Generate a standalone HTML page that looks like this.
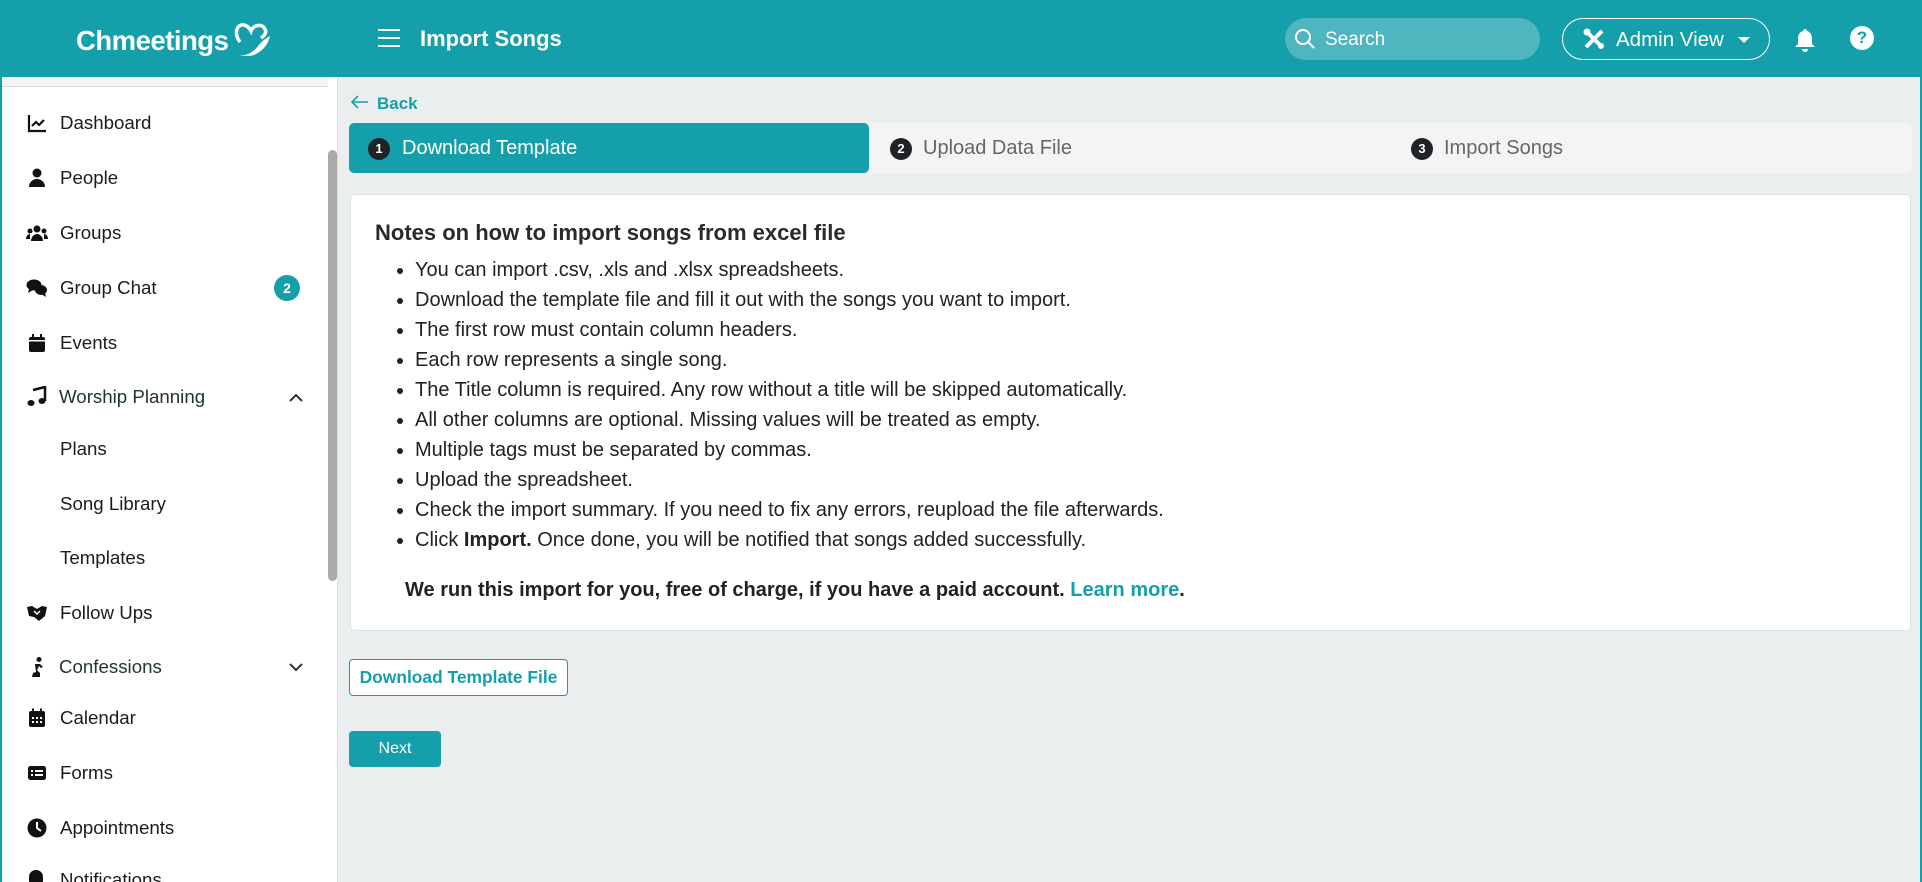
<!DOCTYPE html>
<html><head><meta charset="utf-8"><style>
*{box-sizing:border-box;margin:0;padding:0}
html{width:1922px;height:882px;overflow:hidden}
body{width:1922px;height:882px;overflow:hidden;font-family:"Liberation Sans",sans-serif;background:#eaeeef;position:relative}
.hdr{position:absolute;left:0;top:0;width:1922px;height:77px;background:#159fab;color:#fff}
.abs{position:absolute}
.side{position:absolute;left:0;top:77px;width:338px;height:805px;background:#fff;border-right:1px solid #dcdcdc;overflow:hidden}
.it{position:absolute;left:60px;font-size:18.7px;color:#1c1c1c;transform:translateY(-50%)}
.ic{position:absolute;left:26px;transform:translateY(-50%);width:22px;height:22px}
.main li{height:30px;line-height:30px}
</style></head><body>
<div class="hdr">
 <div class="abs" style="left:76px;top:25px;font-size:27.5px;font-weight:bold;letter-spacing:-0.5px">Chmeetings</div>
 <svg class="abs" style="left:232px;top:20px" width="40" height="40" viewBox="0 0 40 40" fill="none" stroke="#fff" stroke-width="3.5"><path d="M8 22 C2 14 4 4 12 5 C16 6 18 9 19 11 C21 5 30 3 33 9 C35 13 32 16 29 18"/><path d="M6 36 C14 36 22 32 26 26 C29 22 34 18 38 16 C36 26 28 34 18 36 Z" fill="#fff" stroke="none"/></svg>
 <div class="abs" style="left:378px;top:29px;width:22px;height:2px;background:#fff;box-shadow:0 8px 0 #fff,0 16px 0 #fff"></div>
 <div class="abs" style="left:420px;top:26px;font-size:22px;font-weight:bold">Import Songs</div>
 <div class="abs" style="left:1285px;top:18px;width:255px;height:42px;border-radius:21px;background:#4fb5bf"></div>
 <svg class="abs" style="left:1294px;top:28px" width="22" height="22" viewBox="0 0 22 22" fill="none" stroke="#fff" stroke-width="2"><circle cx="9" cy="9" r="7"/><path d="M14 14l6 6"/></svg>
 <div class="abs" style="left:1325px;top:29px;font-size:19px">Search</div>
 <div class="abs" style="left:1562px;top:18px;width:208px;height:42px;border-radius:21px;border:1.5px solid #fff"></div>
 <svg class="abs" style="left:1583px;top:28px" width="22" height="22" viewBox="0 0 22 22" fill="#fff" stroke="#fff"><path d="M3 19L19 3" stroke-width="4"/><path d="M3 3l16 16" stroke-width="4"/><circle cx="4" cy="4" r="3"/><circle cx="18" cy="18" r="2.5"/></svg>
 <div class="abs" style="left:1616px;top:28px;font-size:20.5px">Admin View</div>
 <div class="abs" style="left:1738px;top:37px;border:6px solid transparent;border-top:6px solid #fff;border-bottom:0"></div>
 <svg class="abs" style="left:1794px;top:27px" width="22" height="26" viewBox="0 0 22 26" fill="#fff"><path d="M11 2c1 0 2 1 2 2c4 1 5 5 5 8v5l3 3H1l3-3v-5c0-3 1-7 5-8c0-1 1-2 2-2z"/><path d="M8 22h6c0 2-1.5 3-3 3s-3-1-3-3z"/></svg>
 <div class="abs" style="left:1850px;top:26px;width:24px;height:24px;border-radius:50%;background:#fff;color:#159fab;font-weight:bold;font-size:17px;text-align:center;line-height:24px">?</div>
</div>

<div class="side">
 <div class="abs" style="left:0;top:0;width:328px;height:10px;background:#f4f4f4;border-bottom:1px solid #dcdcdc"></div>
 <div class="abs" style="left:328px;top:73px;width:9px;height:431px;border-radius:5px;background:#aaa"></div>
 <svg class="ic" style="top:46px" viewBox="0 0 22 22" fill="none" stroke="#111" stroke-width="2.2"><path d="M3 3v16h17"/><path d="M6 14l4-4 3 3 5-5"/></svg>
 <div class="it" style="top:46px">Dashboard</div>
 <svg class="ic" style="top:101px" viewBox="0 0 22 22" fill="#111"><circle cx="11" cy="6" r="4.5"/><path d="M3 20c0-5 4-8 8-8s8 3 8 8z"/></svg>
 <div class="it" style="top:101px">People</div>
 <svg class="ic" style="top:156px" viewBox="0 0 22 22" fill="#111"><circle cx="11" cy="7" r="3.5"/><circle cx="4" cy="9" r="2.5"/><circle cx="18" cy="9" r="2.5"/><path d="M5 19c0-4 3-7 6-7s6 3 6 7z"/><path d="M0 17c0-3 2-5 4-5v5z"/><path d="M22 17c0-3-2-5-4-5v5z"/></svg>
 <div class="it" style="top:156px">Groups</div>
 <svg class="ic" style="top:211px" viewBox="0 0 22 22" fill="#111"><ellipse cx="8" cy="8" rx="7.5" ry="5.5"/><path d="M3 12l-1 4 5-3z"/><ellipse cx="15" cy="13" rx="6" ry="5"/><path d="M19 16l1 4-5-3z"/></svg>
 <div class="it" style="top:211px">Group Chat</div>
 <div class="abs" style="left:274px;top:198px;width:26px;height:26px;border-radius:13px;background:#159fab;color:#fff;font-size:14px;font-weight:bold;text-align:center;line-height:26px">2</div>
 <svg class="ic" style="top:266px" viewBox="0 0 22 22" fill="#111"><rect x="3" y="5" width="16" height="15" rx="2"/><rect x="6" y="2" width="2" height="5"/><rect x="14" y="2" width="2" height="5"/><rect x="3" y="8" width="16" height="1.5" fill="#fff"/></svg>
 <div class="it" style="top:266px">Events</div>
 <svg class="ic" style="top:320px" viewBox="0 0 22 22" fill="#111"><path d="M7 4l12-3v14" stroke="#111" stroke-width="2.5" fill="none"/><ellipse cx="5" cy="17" rx="3.5" ry="3"/><ellipse cx="16" cy="15" rx="3.5" ry="3"/></svg>
 <div class="it" style="top:320px;left:59px;color:#233">Worship Planning</div>
 <svg class="abs" style="left:288px;top:314px" width="16" height="12" viewBox="0 0 16 12" fill="none" stroke="#333" stroke-width="2"><path d="M2 10l6-6 6 6"/></svg>
 <div class="it" style="top:372px">Plans</div>
 <div class="it" style="top:427px">Song Library</div>
 <div class="it" style="top:481px">Templates</div>
 <svg class="ic" style="top:536px" viewBox="0 0 22 22" fill="#111"><path d="M1 5l5-1 5 3 5-3 5 1-2 9-6 5-5-4-5-1z"/><path d="M8 9l3 3 3-3" stroke="#fff" stroke-width="1.5" fill="none"/></svg>
 <div class="it" style="top:536px">Follow Ups</div>
 <svg class="ic" style="top:590px" viewBox="0 0 22 22" fill="#111"><circle cx="13" cy="3.5" r="2.5"/><path d="M9 8l5 0 3 3-2 1-2-2-2 4 3 3v4H6l1-4 3-1z"/></svg>
 <div class="it" style="top:590px;left:59px;color:#233">Confessions</div>
 <svg class="abs" style="left:288px;top:584px" width="16" height="12" viewBox="0 0 16 12" fill="none" stroke="#333" stroke-width="2"><path d="M2 3l6 6 6-6"/></svg>
 <svg class="ic" style="top:641px" viewBox="0 0 22 22" fill="#111"><rect x="3" y="4" width="16" height="16" rx="2"/><rect x="6" y="1.5" width="2" height="4"/><rect x="14" y="1.5" width="2" height="4"/><g fill="#fff"><rect x="6" y="10" width="2" height="2"/><rect x="10" y="10" width="2" height="2"/><rect x="14" y="10" width="2" height="2"/><rect x="6" y="14" width="2" height="2"/><rect x="10" y="14" width="2" height="2"/><rect x="14" y="14" width="2" height="2"/></g></svg>
 <div class="it" style="top:641px">Calendar</div>
 <svg class="ic" style="top:696px" viewBox="0 0 22 22" fill="#111"><rect x="2" y="4" width="18" height="14" rx="2.5"/><g fill="#fff"><rect x="5" y="8" width="2" height="2"/><rect x="9" y="8" width="8" height="2"/><rect x="5" y="12" width="2" height="2"/><rect x="9" y="12" width="8" height="2"/></g></svg>
 <div class="it" style="top:696px">Forms</div>
 <svg class="ic" style="top:751px" viewBox="0 0 22 22"><circle cx="11" cy="11" r="9.5" fill="#111"/><path d="M11 5v6l4 3" stroke="#fff" stroke-width="2" fill="none"/></svg>
 <div class="it" style="top:751px">Appointments</div>
 <div class="it" style="top:803px">Notifications</div>
 <div class="abs" style="left:29px;top:793px;width:14px;height:18px;border-radius:7px 7px 2px 2px;background:#111"></div>
</div>

<div class="main">
 <svg class="abs" style="left:351px;top:95px" width="18" height="14" viewBox="0 0 18 14" fill="none" stroke="#159fab" stroke-width="1.6"><path d="M17 7H2M7 1L1 7l6 6"/></svg>
 <div class="abs" style="left:377px;top:94px;font-size:17px;font-weight:bold;color:#159fab">Back</div>
 <div class="abs" style="left:349px;top:123px;width:1563px;height:50px;background:#f4f4f4;border-radius:5px"></div>
 <div class="abs" style="left:349px;top:123px;width:520px;height:50px;background:#159fab;border-radius:5px"></div>
 <div class="abs" style="left:368px;top:138px;width:22px;height:22px;border-radius:50%;background:#1f2328;color:#fff;font-size:13px;font-weight:bold;text-align:center;line-height:22px">1</div>
 <div class="abs" style="left:402px;top:137px;font-size:20px;color:#fff">Download Template</div>
 <div class="abs" style="left:890px;top:138px;width:22px;height:22px;border-radius:50%;background:#1f2328;color:#fff;font-size:13px;font-weight:bold;text-align:center;line-height:22px">2</div>
 <div class="abs" style="left:923px;top:137px;font-size:20px;color:#666">Upload Data File</div>
 <div class="abs" style="left:1411px;top:138px;width:22px;height:22px;border-radius:50%;background:#1f2328;color:#fff;font-size:13px;font-weight:bold;text-align:center;line-height:22px">3</div>
 <div class="abs" style="left:1444px;top:137px;font-size:20px;color:#666">Import Songs</div>

 <div class="abs" style="left:350px;top:194px;width:1561px;height:437px;background:#fff;border:1px solid #dde2e4;border-radius:5px">
  <div class="abs" style="left:24px;top:25px;font-size:22px;font-weight:bold;color:#2a2a2a">Notes on how to import songs from excel file</div>
  <ul class="abs" style="left:64px;top:60px;font-size:20px;color:#222;list-style:disc">
   <li>You can import .csv, .xls and .xlsx spreadsheets.</li>
   <li>Download the template file and fill it out with the songs you want to import.</li>
   <li>The first row must contain column headers.</li>
   <li>Each row represents a single song.</li>
   <li>The Title column is required. Any row without a title will be skipped automatically.</li>
   <li>All other columns are optional. Missing values will be treated as empty.</li>
   <li>Multiple tags must be separated by commas.</li>
   <li>Upload the spreadsheet.</li>
   <li>Check the import summary. If you need to fix any errors, reupload the file afterwards.</li>
   <li>Click <b>Import.</b> Once done, you will be notified that songs added successfully.</li>
  </ul>
  <div class="abs" style="left:54px;top:384px;font-size:20px;font-weight:bold;color:#222">We run this import for you, free of charge, if you have a paid account. <span style="color:#159fab">Learn more</span>.</div>
 </div>
 <div class="abs" style="left:349px;top:659px;width:219px;height:37px;border:1px solid #159fab;border-radius:4px;background:#fff;color:#159fab;font-size:17.4px;font-weight:bold;text-align:center;line-height:35px">Download Template File</div>
 <div class="abs" style="left:349px;top:731px;width:92px;height:36px;border-radius:4px;background:#159fab;color:#fff;font-size:16px;text-align:center;line-height:36px">Next</div>
</div>
<div class="abs" style="left:0;top:0;width:2px;height:882px;background:#159fab"></div>
<div class="abs" style="right:0;top:0;width:2px;height:882px;background:#159fab"></div>
</body></html>
